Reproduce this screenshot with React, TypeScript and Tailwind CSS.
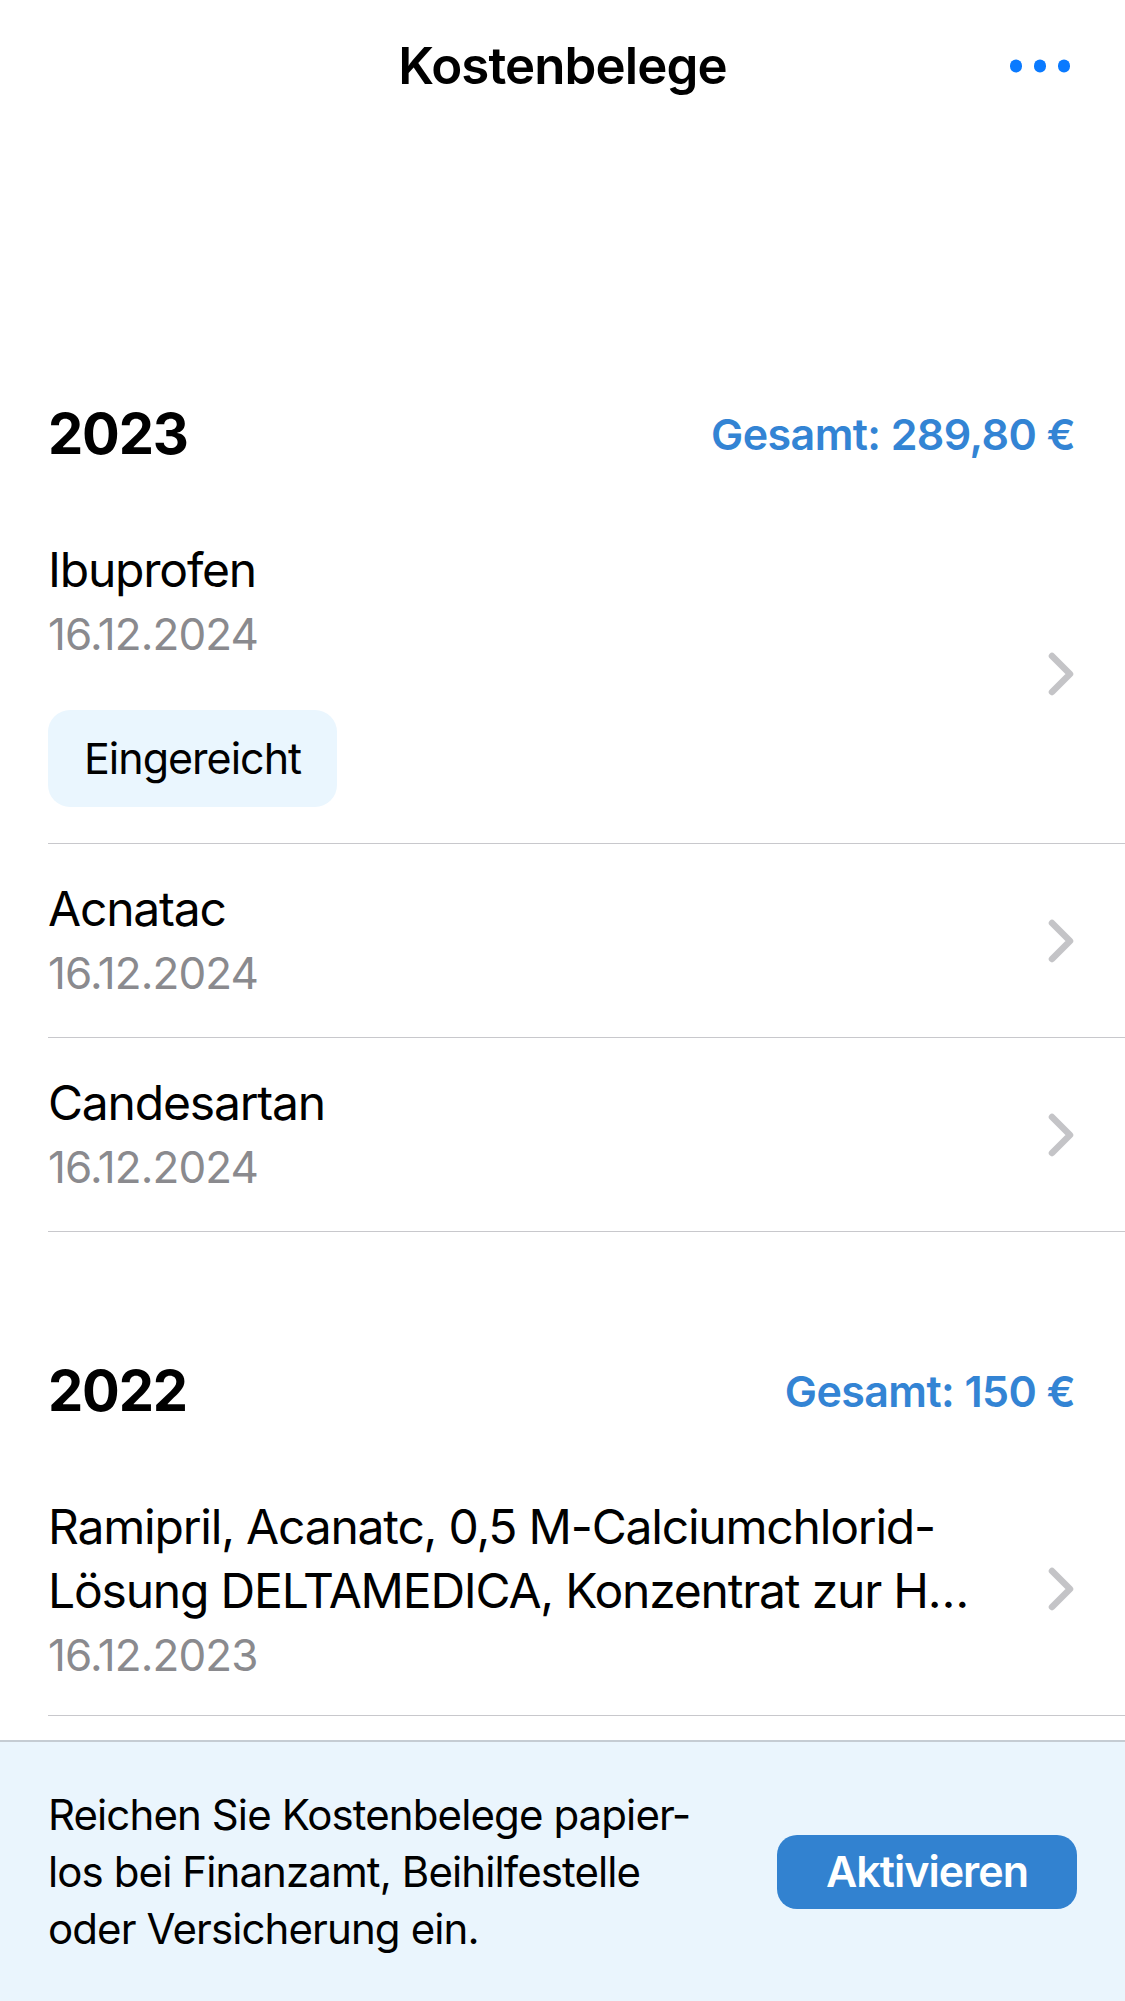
import React from 'react';

interface Beleg {
  id: string;
  title: string;
  date: string;
  status?: string;
  // long titles: first line as shown, rest truncated on line two
  wrap?: [string, string];
}

interface YearGroup {
  year: string;
  total: string;
  items: Beleg[];
}

const groups: YearGroup[] = [
  {
    year: '2023',
    total: 'Gesamt: 289,80 €',
    items: [
      { id: 'a', title: 'Ibuprofen', date: '16.12.2024', status: 'Eingereicht' },
      { id: 'b', title: 'Acnatac', date: '16.12.2024' },
      { id: 'c', title: 'Candesartan', date: '16.12.2024' },
    ],
  },
  {
    year: '2022',
    total: 'Gesamt: 150 €',
    items: [
      {
        id: 'd',
        title:
          'Ramipril, Acanatc, 0,5 M-Calciumchlorid-Lösung DELTAMEDICA, Konzentrat zur Herstellung einer Infusionslösung',
        wrap: [
          'Ramipril, Acanatc, 0,5 M-Calciumchlorid-',
          'Lösung DELTAMEDICA, Konzentrat zur Herstellung einer Infusionslösung',
        ],
        date: '16.12.2023',
      },
    ],
  },
];

const Chevron = () => (
  <svg width="28" height="46" viewBox="0 0 28 46" fill="none" className="shrink-0">
    <polyline
      points="5,5 23,23 5,41"
      stroke="#c4c4c7"
      strokeWidth="6.5"
      strokeLinecap="round"
      strokeLinejoin="round"
    />
  </svg>
);

const BelegRow: React.FC<{ item: Beleg }> = ({ item }) => {
  const pb = item.status ? 'pb-[36px]' : item.wrap ? 'pb-[28px]' : 'pb-[32px]';
  return (
    <div className="ml-[48px] pr-[50px] border-b border-[#c8c8cc] flex items-center gap-[40px]">
      <div className={`flex-1 min-w-0 pt-[33px] ${pb}`}>
        {item.wrap ? (
          <div className="text-[48px] leading-[64px] text-black tracking-[-1.2px] pr-[30px]" title={item.title}>
            <p className="whitespace-nowrap">{item.wrap[0]}</p>
            <p className="truncate">{item.wrap[1]}</p>
          </div>
        ) : (
          <p className="text-[48px] leading-[64px] text-black tracking-[-1.2px]">{item.title}</p>
        )}
        <p className="text-[44px] leading-[64px] text-[#8a8a8e] tracking-[-0.9px]">{item.date}</p>
        {item.status && (
          <div className="mt-[44px] inline-flex items-center h-[97px] px-[36px] rounded-[22px] bg-[#eaf6fe] text-[43px] text-black tracking-[-1px]">
            {item.status}
          </div>
        )}
      </div>
      <Chevron />
    </div>
  );
};

export default function App() {
  return (
    <div className="h-[2001px] w-full bg-white flex flex-col overflow-hidden font-['Inter','Noto_Sans',sans-serif]">
      <header className="h-[132px] shrink-0 relative flex items-center justify-center">
        <h1 className="text-[51px] font-semibold text-black tracking-[-0.9px]">Kostenbelege</h1>
        <button className="absolute right-[55px] top-1/2 -translate-y-1/2 flex items-center gap-[12px]">
          <span className="w-[12px] h-[13px] rounded-full bg-[#0a7aff]" />
          <span className="w-[12px] h-[13px] rounded-full bg-[#0a7aff]" />
          <span className="w-[12px] h-[13px] rounded-full bg-[#0a7aff]" />
        </button>
      </header>

      <main className="flex-1 overflow-hidden">
        {groups.map((group, i) => (
          <section key={group.year} className={i === 0 ? 'mt-[231px]' : 'mt-[88px]'}>
            <div className="h-[142px] pl-[48px] pr-[50px] flex items-center justify-between">
              <h2 className="text-[56px] font-bold text-black tracking-[-1.2px]">{group.year}</h2>
              <span className="text-[43px] font-semibold text-[#3384d4] tracking-[-0.6px]">{group.total}</span>
            </div>
            {group.items.map((item) => (
              <BelegRow key={item.id} item={item} />
            ))}
          </section>
        ))}
      </main>

      <footer className="h-[261px] shrink-0 border-t-2 border-[#c5ccd3] bg-[#eaf5fd] flex items-center pl-[48px] pr-[48px]">
        <p className="w-[664px] text-[42px] leading-[57px] text-black hyphens-manual tracking-[-0.9px]">
          Reichen Sie Kostenbelege papier&shy;los bei Finanzamt, Beihilfestelle oder Versicherung ein.
        </p>
        <button className="ml-auto shrink-0 w-[300px] h-[74px] rounded-[20px] bg-[#3282d0] text-white text-[43px] font-semibold tracking-[-1px]">
          Aktivieren
        </button>
      </footer>
    </div>
  );
}
